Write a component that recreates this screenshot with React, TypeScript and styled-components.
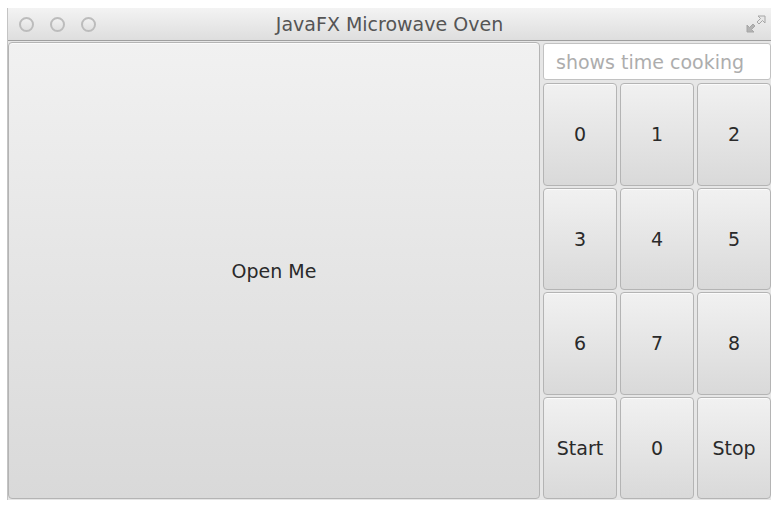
import React from 'react';
import styled, { createGlobalStyle } from 'styled-components';

const GlobalStyle = createGlobalStyle`
  html, body {
    margin: 0;
    padding: 0;
    background: #ffffff;
    font-family: "DejaVu Sans", "Liberation Sans", sans-serif;
  }
`;

const Window = styled.div`
  margin: 8px 0 0 7px;
  width: 764px;
  height: 492px;
  display: flex;
  flex-direction: column;
  background: #e6e6e6;
  border-left: 1px solid #c4c4c4;
  box-sizing: border-box;
`;

const TitleBar = styled.div`
  position: relative;
  height: 33px;
  flex-shrink: 0;
  display: flex;
  align-items: center;
  justify-content: center;
  background: linear-gradient(#f3f3f3, #dedede);
  border-bottom: 1px solid #9f9f9f;
  box-sizing: border-box;
  color: #555555;
  font-size: 19px;
`;

const Lights = styled.div`
  position: absolute;
  left: 11px;
  top: 9px;
  display: flex;
  gap: 16px;
`;

const Light = styled.span`
  width: 15px;
  height: 15px;
  box-sizing: border-box;
  border-radius: 50%;
  border: 2px solid #bcbcbc;
  background: linear-gradient(#f1f1f1, #e0e0e0);
`;

const Resize = styled.svg`
  position: absolute;
  right: 4px;
  top: 5px;
`;

const Content = styled.div`
  flex: 1;
  display: grid;
  grid-template-columns: 532px 228px;
  column-gap: 3px;
  padding: 1px 0 1px 0;
  min-height: 0;
`;

const Button = styled.button`
  margin: 0;
  padding: 0;
  border: 1px solid #b4b4b4;
  border-radius: 4px;
  background: linear-gradient(#f1f1f1, #d9d9d9);
  box-shadow: inset 0 1px 0 #fbfbfb;
  color: #2a2a2a;
  font-family: "DejaVu Sans", "Liberation Sans", sans-serif;
  font-size: 19px;
  display: flex;
  align-items: center;
  justify-content: center;
  box-sizing: border-box;
`;

const Side = styled.div`
  display: flex;
  flex-direction: column;
  gap: 3px;
  padding-top: 1px;
  min-height: 0;
`;

const TimeField = styled.input`
  height: 37px;
  margin: 0;
  border: 1px solid #c2c2c2;
  border-radius: 3px;
  background: #ffffff;
  padding: 0 12px;
  box-sizing: border-box;
  font-family: "DejaVu Sans", "Liberation Sans", sans-serif;
  font-size: 19px;
  color: #333;
  &::placeholder {
    color: #adadad;
  }
`;

const Keypad = styled.div`
  flex: 1;
  display: grid;
  grid-template-columns: repeat(3, 1fr);
  grid-template-rows: repeat(4, 1fr);
  gap: 2px 3px;
  min-height: 0;
`;

const keys = ['0', '1', '2', '3', '4', '5', '6', '7', '8', 'Start', '0', 'Stop'];

export default function App() {
  return (
    <>
      <GlobalStyle />
      <Window>
        <TitleBar>
          <Lights>
            <Light />
            <Light />
            <Light />
          </Lights>
          JavaFX Microwave Oven
          <Resize width="22" height="22" viewBox="0 0 22 22">
            <path d="M13 3 H20 V10 L17.5 7.5 L14 11 L12 9 L15.5 5.5 Z" fill="#e8e8e8" stroke="#a6a6a6" strokeWidth="1" />
            <path d="M9 19 H2 V12 L4.5 14.5 L8 11 L10 13 L6.5 16.5 Z" fill="#b3b3b3" stroke="#a6a6a6" strokeWidth="1" />
          </Resize>
        </TitleBar>
        <Content>
          <Button>Open Me</Button>
          <Side>
            <TimeField placeholder="shows time cooking" />
            <Keypad>
              {keys.map((k, i) => (
                <Button key={i}>{k}</Button>
              ))}
            </Keypad>
          </Side>
        </Content>
      </Window>
    </>
  );
}
